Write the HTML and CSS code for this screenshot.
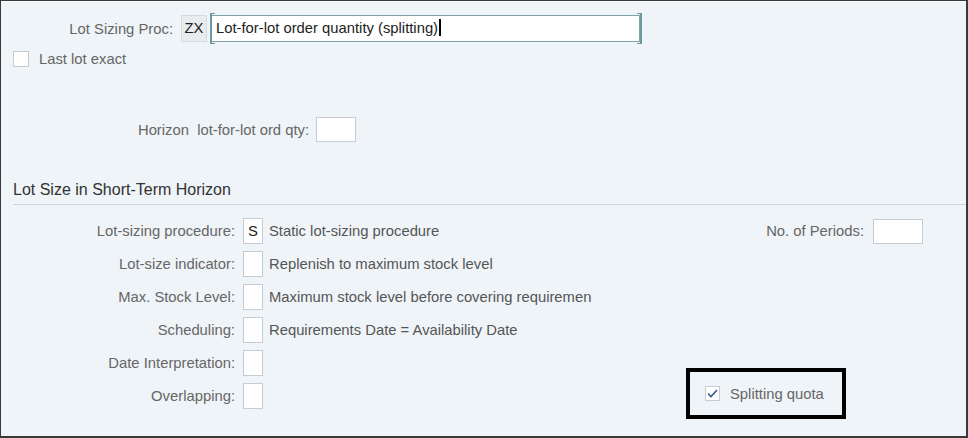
FILE: index.html
```html
<!DOCTYPE html>
<html>
<head>
<meta charset="utf-8">
<link rel="stylesheet" href="styles.css">
</head>
<body>
<div class="frame">
  <div class="proc-row">
    <span class="lbl proc-lbl">Lot Sizing Proc:</span>
    <span class="code">ZX</span>
    <span class="desc-input">Lot-for-lot order quantity (splitting)<span class="caret"></span></span>
  </div>
  <div class="check-row">
    <span class="cb"></span>
    <span class="lbl">Last lot exact</span>
  </div>
  <div class="horizon-row">
    <span class="lbl horizon-lbl">Horizon&nbsp; lot-for-lot ord qty:</span>
    <span class="field"></span>
  </div>
  <div class="section-title">Lot Size in Short-Term Horizon</div>
  <div class="rows">
    <div class="row">
      <span class="lbl row-lbl">Lot-sizing procedure:</span>
      <span class="box">S</span>
      <span class="desc">Static lot-sizing procedure</span>
      <span class="periods">
        <span class="lbl">No. of Periods:</span>
        <span class="field wide"></span>
      </span>
    </div>
    <div class="row">
      <span class="lbl row-lbl">Lot-size indicator:</span>
      <span class="box"></span>
      <span class="desc">Replenish to maximum stock level</span>
    </div>
    <div class="row">
      <span class="lbl row-lbl">Max. Stock Level:</span>
      <span class="box"></span>
      <span class="desc">Maximum stock level before covering requiremen</span>
    </div>
    <div class="row">
      <span class="lbl row-lbl">Scheduling:</span>
      <span class="box"></span>
      <span class="desc">Requirements Date = Availability Date</span>
    </div>
    <div class="row">
      <span class="lbl row-lbl">Date Interpretation:</span>
      <span class="box"></span>
    </div>
    <div class="row">
      <span class="lbl row-lbl">Overlapping:</span>
      <span class="box"></span>
      <span class="quota">
        <span class="cb checked"><svg width="11" height="9" viewBox="0 0 11 9"><path d="M1 4.5 L4 7.5 L10 1" fill="none" stroke="#2b5d91" stroke-width="1.6"/></svg></span>
        <span class="lbl">Splitting quota</span>
      </span>
    </div>
  </div>
</div>
</body>
</html>
```

FILE: styles.css
```css
* { box-sizing: border-box; }
html, body { margin: 0; padding: 0; }
body {
  font-family: "Liberation Sans", Arial, sans-serif;
  font-size: 14.8px;
  background: #eff4f8;
}
.frame {
  width: 968px;
  height: 438px;
  border: 1px solid #3a3a3a;
  border-right-width: 2px;
  border-bottom-width: 2px;
  background: #eff4f8;
  box-shadow: inset 0 1px 0 #fbfcfd;
  overflow: hidden;
}
.lbl { color: #666; white-space: nowrap; }

.proc-row {
  display: flex;
  align-items: center;
  margin-top: 14px;
  height: 27px;
}
.proc-lbl { width: 172px; text-align: right; }
.code {
  margin-left: 8px;
  width: 26px;
  height: 27px;
  line-height: 25px;
  text-align: center;
  background: #e9ecef;
  border: 1px solid #d6dadd;
  color: #222;
}
.desc-input {
  position: relative;
  margin-left: 4px;
  width: 429px;
  height: 27px;
  line-height: 25px;
  padding-left: 4px;
  background: #fff;
  border: 1px solid #7ea3aa;
  color: #222;
}
.desc-input::before,
.desc-input::after {
  content: "";
  position: absolute;
  top: -3px;
  bottom: -3px;
  width: 3px;
  border-top: 1px solid #6f979e;
  border-bottom: 1px solid #6f979e;
}
.desc-input::before { left: -2px; border-left: 2px solid #6f979e; }
.desc-input::after { right: -3px; border-right: 2px solid #6f979e; }
.caret {
  display: inline-block;
  width: 2px;
  height: 17px;
  background: #000;
  vertical-align: -3px;
  margin-left: 1px;
}

.cb {
  display: inline-flex;
  align-items: center;
  justify-content: center;
  width: 16px;
  height: 16px;
  background: #fff;
  border: 1px solid #c6ccd1;
}
.check-row {
  display: flex;
  align-items: center;
  gap: 10px;
  margin-top: 9px;
  padding-left: 12px;
  height: 16px;
}

.horizon-row {
  display: flex;
  align-items: center;
  margin-top: 50px;
  height: 25px;
}
.horizon-lbl { width: 308px; text-align: right; }
.field {
  display: inline-block;
  margin-left: 7px;
  width: 40px;
  height: 25px;
  background: #fff;
  border: 1px solid #c6ccd1;
}
.field.wide { width: 50px; margin-left: 9px; }

.section-title {
  margin-top: 38px;
  margin-left: 12px;
  padding-bottom: 4px;
  font-size: 16px;
  line-height: 20px;
  color: #333;
  border-bottom: 1px solid #cfd5da;
}

.rows {
  display: flex;
  flex-direction: column;
  gap: 7px;
  margin-top: 13px;
}
.row {
  display: flex;
  align-items: center;
  height: 26px;
}
.row-lbl { width: 234px; text-align: right; }
.box {
  margin-left: 8px;
  width: 20px;
  height: 26px;
  line-height: 24px;
  text-align: center;
  background: #fff;
  border: 1px solid #c6ccd1;
  color: #222;
}
.desc { margin-left: 6px; color: #555; }
.periods {
  display: flex;
  align-items: center;
  margin-left: auto;
  margin-right: 43px;
}
.quota {
  display: flex;
  align-items: center;
  gap: 10px;
  margin-left: 423px;
  margin-top: -15px;
  margin-bottom: -10px;
  width: 160px;
  height: 51px;
  padding-left: 15px;
  border: 4px solid #000;
}
.quota .cb { width: 15px; height: 15px; }
```
